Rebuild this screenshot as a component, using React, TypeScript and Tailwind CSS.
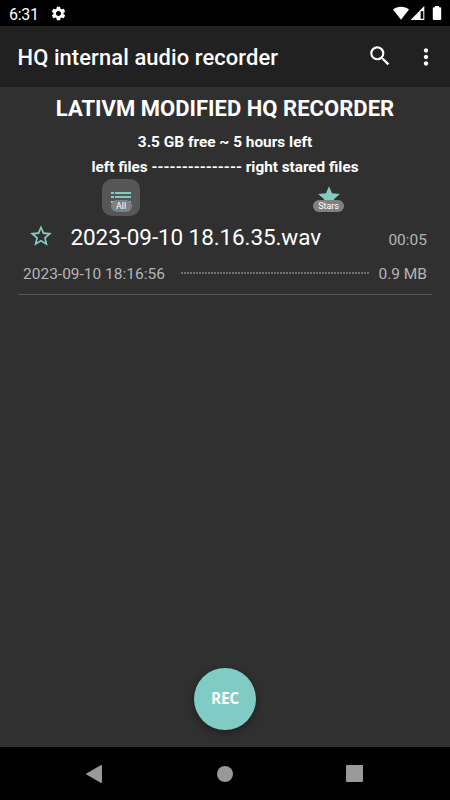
import { MdMoreVert, MdSearch, MdSettings, MdStar, MdStarBorder } from "react-icons/md";

const RECORDING = {
  name: "2023-09-10 18.16.35.wav",
  length: "00:05",
  date: "2023-09-10 18:16:56",
  size: "0.9 MB",
};

function StatusBar() {
  return (
    <div className="flex h-[26px] shrink-0 items-center bg-black pr-[8px] pl-[9px]">
      <span className="w-[41px] pt-[3px] text-[16px] leading-none tracking-[-0.3px]">6:31</span>
      <MdSettings className="size-[17px]" />
      <svg className="ml-auto h-[15px] w-[49px]" viewBox="0 0 49 15" fill="currentColor">
        <path d="M0 3.6C4.7-.2 11.3-.2 16 3.6L8 13.7z" />
        <path d="M31.3 0v14H17.5z" />
        <path d="M27.6 5.2h2.7v7.6h-2.7z" fill="#000" />
        <path d="M42 0h4v1.3h1.2q1 0 1 1v10.7q0 1-1 1h-6.4q-1 0-1-1V2.3q0-1 1-1H42z" />
      </svg>
    </div>
  );
}

function Toolbar() {
  return (
    <header className="flex h-[61px] shrink-0 items-center bg-[#212121] pr-[11px] pl-[17.5px]">
      <h1 className="pt-[3px] text-[21.9px] leading-none font-medium tracking-[0.11px] whitespace-nowrap">
        HQ internal audio recorder
      </h1>
      <button className="mb-[1px] ml-auto" aria-label="Search">
        <MdSearch className="size-[26px]" />
      </button>
      <button className="ml-[20px]" aria-label="More options">
        <MdMoreVert className="size-[26px]" />
      </button>
    </header>
  );
}

function Tabs() {
  return (
    <div className="flex h-[37px] pl-[102px]">
      <button className="flex h-[37px] w-[38px] flex-col items-center rounded-[10px] bg-[#565658] pt-[13px]">
        <svg className="h-[12px] w-[20px] shrink-0 fill-[#80cbc4]" viewBox="0 0 20 12">
          <path d="M0 0h3v2H0zM4 0h16v2H4zM0 4h3v2H0zM4 4h16v2H4zM0 9h3v2H0zM4 9h16v2H4z" />
        </svg>
        <span className="relative -mt-[4px] h-[12px] w-[21px] rounded-full bg-[#808080] text-center text-[9px] leading-[13px]">
          All
        </span>
      </button>
      <button className="ml-[170px] flex h-[37px] w-[37px] flex-col items-center pt-[5px]">
        <MdStar className="size-[26px] shrink-0 text-[#80cbc4]" />
        <span className="relative -mt-[10px] h-[12px] w-[31px] rounded-full bg-[#808080] text-center text-[9px] leading-[13px] tracking-[-0.1px]">
          Stars
        </span>
      </button>
    </div>
  );
}

function Recording() {
  return (
    <article className="mx-[18px] h-[79px] border-b border-[#555] pr-[5px] pl-[5px] text-[#b5b5b5]">
      <div className="flex h-[42px] items-center pl-[5px]">
        <MdStarBorder className="mb-[2px] size-[26px] shrink-0 text-[#80cbc4]" />
        <span className="ml-[16.5px] text-[22.5px] leading-none tracking-[-0.1px] text-white">
          {RECORDING.name}
        </span>
        <span className="ml-auto pt-[7px] text-[15.5px] leading-none">{RECORDING.length}</span>
      </div>
      <div className="flex h-[32px] items-center text-[15.5px] leading-none">
        <span className="pt-[2px]">{RECORDING.date}</span>
        <svg className="mr-[8px] mb-[2px] ml-[16px] h-[2px] min-w-0 flex-1" aria-hidden="true">
          <line x1="0" y1="1" x2="100%" y2="1" stroke="#858585" strokeWidth="1.5" strokeDasharray="2 1" />
        </svg>
        <span className="pt-[2px]">{RECORDING.size}</span>
      </div>
    </article>
  );
}

function NavBar() {
  return (
    <nav className="flex h-[53px] shrink-0 items-center justify-between bg-black pr-[87px] pl-[86px]">
      <svg className="h-[18px] w-[16px] fill-[#999]" viewBox="0 0 16 18">
        <path d="M15 0q1 0 1 1v16q0 1-1 1L.4 9.6Q-.2 9 .4 8.4z" />
      </svg>
      <span className="ml-[1px] size-[16px] rounded-full bg-[#999]" />
      <span className="size-[17px] rounded-[1px] bg-[#999]" />
    </nav>
  );
}

export default function App() {
  return (
    <div className="flex h-[800px] w-[450px] flex-col bg-[#303030] font-['Roboto',sans-serif] text-white">
      <StatusBar />
      <Toolbar />
      <main className="flex flex-1 flex-col">
        <div className="flex flex-col items-center font-bold">
          <h2 className="pt-[11px] text-[22px] leading-[22px] tracking-[0.03px]">
            LATIVM MODIFIED HQ RECORDER
          </h2>
          <p className="mt-[13px] text-[15.4px] leading-[18px]">3.5 GB free ~ 5 hours left</p>
          <p className="mt-[7px] text-[15.3px] leading-[18px]">
            left files --------------- right stared files
          </p>
        </div>
        <div className="pt-[3px]">
          <Tabs />
        </div>
        <Recording />
        <button className="mx-auto mt-auto mb-[17px] size-[62px] rounded-full bg-[#80cbc4] font-['Open_Sans',sans-serif] text-[15.5px] font-bold tracking-[-0.3px] shadow-[0_3px_8px_rgba(0,0,0,0.35)]">
          REC
        </button>
      </main>
      <NavBar />
    </div>
  );
}
